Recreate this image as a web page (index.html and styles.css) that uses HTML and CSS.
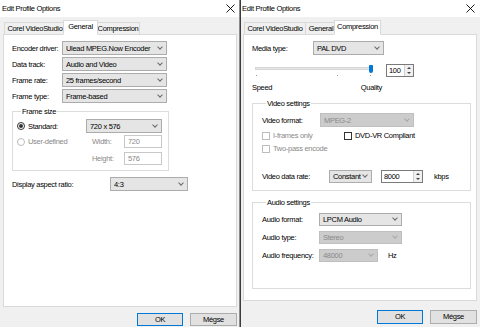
FILE: index.html
```html
<!DOCTYPE html>
<html lang="hu">
<head>
  <meta charset="UTF-8" />
  <title>Edit Profile Options</title>
  <link rel="stylesheet" href="styles.css">
</head>
<body>
  <div class="screen">

    <!-- General tab -->
    <div class="dialog dialog-left">
      <div class="titlebar">
        <span>Edit Profile Options</span>
        <svg class="close" width="9" height="9" viewBox="0 0 9 9"><path d="M0.5 0.5L8.5 8.5M8.5 0.5L0.5 8.5" stroke="#000" stroke-width="0.9"/></svg>
      </div>
      <div class="tabs">
        <div class="tab w-corel">Corel VideoStudio</div>
        <div class="tab active w-general">General</div>
        <div class="tab w-compr">Compression</div>
      </div>
      <div class="panel panel-general">
        <div class="row">
          <span class="lbl w50">Encoder driver:</span>
          <div class="combo w105"><span>Ulead MPEG.Now Encoder</span><i class="chev"></i></div>
        </div>
        <div class="row">
          <span class="lbl w50">Data track:</span>
          <div class="combo w105"><span>Audio and Video</span><i class="chev"></i></div>
        </div>
        <div class="row">
          <span class="lbl w50">Frame rate:</span>
          <div class="combo w105"><span>25 frames/second</span><i class="chev"></i></div>
        </div>
        <div class="row">
          <span class="lbl w50">Frame type:</span>
          <div class="combo w105"><span>Frame-based</span><i class="chev"></i></div>
        </div>

        <fieldset class="group group-frame">
          <legend>Frame size</legend>
          <div class="row row-std">
            <label class="opt w69"><span class="radio checked"></span>Standard:</label>
            <div class="combo w76"><span>720 x 576</span><i class="chev"></i></div>
          </div>
          <div class="row row-edit">
            <label class="opt w75 off"><span class="radio"></span>User-defined</label>
            <span class="lbl w32 off">Width:</span>
            <div class="edit off">720</div>
          </div>
          <div class="row row-edit">
            <span class="w75"></span>
            <span class="lbl w32 off">Height:</span>
            <div class="edit off">576</div>
          </div>
        </fieldset>

        <div class="row row-aspect">
          <span class="lbl w98">Display aspect ratio:</span>
          <div class="combo w78"><span>4:3</span><i class="chev"></i></div>
        </div>
      </div>
      <div class="footer">
        <div class="btn default">OK</div>
        <div class="btn">Mégse</div>
      </div>
    </div>

    <div class="divider"></div>

    <!-- Compression tab -->
    <div class="dialog dialog-right">
      <div class="titlebar">
        <span>Edit Profile Options</span>
        <svg class="close" width="9" height="9" viewBox="0 0 9 9"><path d="M0.5 0.5L8.5 8.5M8.5 0.5L0.5 8.5" stroke="#000" stroke-width="0.9"/></svg>
      </div>
      <div class="tabs">
        <div class="tab w-corel">Corel VideoStudio</div>
        <div class="tab w-general">General</div>
        <div class="tab active w-compr">Compression</div>
      </div>
      <div class="panel panel-compr">
        <div class="row">
          <span class="lbl w61">Media type:</span>
          <div class="combo w71"><span>PAL DVD</span><i class="chev"></i></div>
        </div>

        <div class="slider-row">
          <div class="slider">
            <div class="track"></div>
            <div class="thumb"></div>
            <span class="tick t1"></span>
            <span class="tick t2"></span>
            <span class="tick t3"></span>
          </div>
          <div class="spin w28"><span>100</span><span class="arrows"><i class="up"></i><i class="down"></i></span></div>
        </div>
        <div class="scale">
          <span>Speed</span>
          <span>Quality</span>
        </div>

        <fieldset class="group group-video">
          <legend>Video settings</legend>
          <div class="row">
            <span class="lbl w58">Video format:</span>
            <div class="combo w94 off"><span>MPEG-2</span><i class="chev"></i></div>
          </div>
          <div class="check-row">
            <label class="opt w82 off"><span class="check"></span>I-frames only</label>
            <label class="opt"><span class="check on"></span>DVD-VR Compliant</label>
          </div>
          <div class="check-row">
            <label class="opt off"><span class="check"></span>Two-pass encode</label>
          </div>
          <div class="row row-rate">
            <span class="lbl w67">Video data rate:</span>
            <div class="combo w43"><span>Constant</span><i class="chev"></i></div>
            <div class="spin w42 rate-spin"><span>8000</span><span class="arrows"><i class="up"></i><i class="down"></i></span></div>
            <span class="unit">kbps</span>
          </div>
        </fieldset>

        <fieldset class="group group-audio">
          <legend>Audio settings</legend>
          <div class="row">
            <span class="lbl w57">Audio format:</span>
            <div class="combo w83"><span>LPCM Audio</span><i class="chev"></i></div>
          </div>
          <div class="row">
            <span class="lbl w57">Audio type:</span>
            <div class="combo w83 off"><span>Stereo</span><i class="chev"></i></div>
          </div>
          <div class="row">
            <span class="lbl w57">Audio frequency:</span>
            <div class="combo w59 off"><span>48000</span><i class="chev"></i></div>
            <span class="unit hz">Hz</span>
          </div>
        </fieldset>
      </div>
      <div class="footer">
        <div class="btn default">OK</div>
        <div class="btn">Mégse</div>
      </div>
    </div>

  </div>
</body>
</html>
```

FILE: styles.css
```css
/* Windows 10 style dialog, scaled down */
:root {
  --face: #f0f0f0;
  --tab-border: #d9d9d9;
  --group-border: #dcdcdc;
  --combo-bg: #e5e5e5;
  --combo-border: #acacac;
  --combo-off-bg: #cccccc;
  --combo-off-border: #bfbfbf;
  --gray-text: #8a8a8a;
  --accent: #0078d7;
}

* {
  box-sizing: border-box;
}

body {
  margin: 0;
  background: var(--face);
  color: #000;
  font-family: "Liberation Sans", Arial, sans-serif;
  font-size: 7.5px;
  letter-spacing: -0.3px;
  line-height: 9px;
}

.screen {
  display: flex;
  width: 480px;
  height: 327px;
  overflow: hidden;
}

.dialog {
  display: flex;
  flex-direction: column;
  width: 239px;
  height: 327px;
  flex: none;
  background: var(--face);
}

.divider {
  width: 2px;
  flex: none;
  background: linear-gradient(to right, #8c8c8c 50%, #3c3c3c 50%);
}

/* Title bar */
.titlebar {
  height: 17px;
  background: #fff;
  display: flex;
  align-items: center;
  justify-content: space-between;
  padding: 0 2px 1px 2px;
}

.dialog-left .titlebar .close {
  margin-right: 2px;
}

.dialog-right .titlebar {
  padding-left: 1px;
}

.dialog-right .titlebar .close {
  margin-right: 3px;
}

/* Tabs */
.tabs {
  display: flex;
  align-items: flex-end;
  margin: 3px 0 -1px 4px;
  position: relative;
  z-index: 1;
}

.dialog-right .tabs {
  margin-left: 3px;
}

.tab {
  height: 13px;
  border: 1px solid var(--tab-border);
  margin-right: -1px;
  background: var(--face);
  text-align: center;
  line-height: 11px;
  white-space: nowrap;
}

.tab.active {
  height: 15px;
  background: #fff;
  border-bottom-color: #fff;
  margin: 0 -2px 0 -2px;
  padding: 0 2px;
  line-height: 11px;
  position: relative;
  z-index: 2;
}

.w-corel { width: 62px; }
.w-general { width: 32px; }
.w-general.active { width: 35px; }
.w-compr { width: 44px; }
.w-compr.active { width: 47px; }

/* Panel */
.panel {
  border: 1px solid var(--tab-border);
  background: #fff;
  margin: 0 2px 0 3px;
  padding: 6px 0 0 8px;
}

.panel-general {
  height: 273px;
}

.dialog-right .panel {
  margin: 0 3px 0 2px;
  height: 267px;
}

/* Form rows */
.row {
  display: flex;
  align-items: center;
  height: 14px;
  margin-bottom: 2px;
  white-space: nowrap;
}

.lbl {
  flex: none;
}

.off {
  color: var(--gray-text);
}

.w28 { width: 28px; }
.w32 { width: 32px; }
.w42 { width: 42px; }
.w43 { width: 43px; }
.w50 { width: 50px; }
.w57 { width: 57px; }
.w58 { width: 58px; }
.w59 { width: 59px; }
.w61 { width: 61px; }
.w67 { width: 67px; }
.w69 { width: 69px; }
.w71 { width: 71px; }
.w75 { width: 75px; flex: none; }
.w76 { width: 76px; }
.w78 { width: 78px; }
.w82 { width: 82px; }
.w83 { width: 83px; }
.w94 { width: 94px; }
.w98 { width: 98px; }
.w105 { width: 105px; }

/* Combo box */
.combo {
  flex: none;
  height: 14px;
  border: 1px solid var(--combo-border);
  background: var(--combo-bg);
  display: flex;
  align-items: center;
  justify-content: space-between;
  padding: 0 3px 0 3px;
}

.combo.off {
  background: var(--combo-off-bg);
  border-color: var(--combo-off-border);
  color: var(--gray-text);
}

.chev {
  width: 4px;
  height: 4px;
  border-right: 1px solid #6a6a6a;
  border-bottom: 1px solid #6a6a6a;
  transform: rotate(45deg);
  margin: 0 1px 3px 0;
}

.combo.off .chev {
  border-color: #a8a8a8;
}

/* Edit boxes */
.edit {
  width: 38px;
  height: 13px;
  border: 1px solid #c8c8c8;
  background: #fff;
  padding-left: 3px;
  line-height: 11px;
}

.edit.off {
  color: var(--gray-text);
}

/* Radio and check boxes */
.opt {
  display: flex;
  align-items: center;
  flex: none;
}

.radio {
  width: 8px;
  height: 8px;
  border: 1px solid #333;
  border-radius: 50%;
  margin-right: 3px;
  display: flex;
  align-items: center;
  justify-content: center;
}

.radio.checked::after {
  content: "";
  width: 4px;
  height: 4px;
  border-radius: 50%;
  background: #333;
}

.opt.off .radio {
  border-color: #bcbcbc;
}

.check {
  width: 8px;
  height: 8px;
  border: 1px solid #bcbcbc;
  background: #fff;
  margin-right: 3px;
}

.check.on {
  border-color: #333;
}

/* Group boxes */
.group {
  margin: 0;
  padding: 0;
  border: 1px solid var(--group-border);
  border-radius: 0;
}

.group legend {
  margin-left: 4px;
  padding: 0 1px;
  line-height: 9px;
}

.group-frame {
  width: 157px;
  margin-top: 4px;
  padding: 3px 0 5px 4px;
}

.row-std {
  margin-bottom: 2px;
}

.row-edit {
  height: 13px;
  margin-bottom: 4px;
}

.row-edit:last-child {
  margin-bottom: 0;
}

.row-aspect {
  margin-top: 6px;
}

/* Slider */
.slider-row {
  display: flex;
  align-items: center;
  height: 13px;
  margin-top: 9px;
}

.slider {
  position: relative;
  width: 134px;
  height: 13px;
  flex: none;
}

.track {
  position: absolute;
  left: 3px;
  top: 3px;
  width: 118px;
  height: 3px;
  background: #e7e7e7;
  border: 1px solid #d6d6d6;
}

.thumb {
  position: absolute;
  left: 117px;
  top: 1px;
  width: 4px;
  height: 8px;
  background: var(--accent);
  border-radius: 1px 1px 2px 2px;
}

.tick {
  position: absolute;
  top: 11px;
  width: 1px;
  height: 1px;
  background: #9a9a9a;
}

.t1 { left: 4px; }
.t2 { left: 85px; }
.t3 { left: 118px; }

.spin {
  height: 13px;
  border: 1px solid #7a7a7a;
  background: #fff;
  display: flex;
  justify-content: space-between;
  padding-left: 2px;
  line-height: 11px;
  flex: none;
}

.arrows {
  width: 9px;
  display: flex;
  flex-direction: column;
  justify-content: space-evenly;
  align-items: center;
  background: #f0f0f0;
  border-left: 1px solid #d0d0d0;
}

.arrows i {
  width: 0;
  height: 0;
  border-left: 2px solid transparent;
  border-right: 2px solid transparent;
}

.arrows .up {
  border-bottom: 2px solid #444;
}

.arrows .down {
  border-top: 2px solid #444;
}

.scale {
  display: flex;
  justify-content: space-between;
  width: 130px;
  margin-top: 6px;
}

/* Video settings */
.group-video {
  width: 219px;
  margin-top: 7px;
  padding: 5px 0 7px 9px;
}

.check-row {
  display: flex;
  align-items: center;
  height: 9px;
  margin-top: 4px;
}

.group-video > .row {
  margin-bottom: 0;
}

.row-rate {
  height: 13px;
  margin-top: 17px;
}

.row-rate .combo {
  height: 13px;
}

.rate-spin {
  margin-left: 9px;
}

.unit {
  margin-left: 11px;
}

/* Audio settings */
.group-audio {
  width: 219px;
  margin-top: 7px;
  padding: 6px 0 26px 9px;
}

.group-audio .row {
  height: 13px;
  margin-bottom: 5px;
}

.group-audio .row:last-child {
  margin-bottom: 0;
}

.group-audio .combo {
  height: 13px;
}

.unit.hz {
  margin-left: 10px;
}

/* Buttons */
.footer {
  display: flex;
  justify-content: flex-end;
  gap: 7px;
  padding: 6px 2px 0 0;
}

.dialog-right .footer {
  padding: 9px 3px 0 0;
}

.btn {
  width: 46px;
  height: 13px;
  border: 1px solid #adadad;
  background: #e1e1e1;
  text-align: center;
  line-height: 11px;
}

.dialog-right .btn {
  height: 14px;
  line-height: 12px;
}

.btn + .btn {
  width: 47px;
}

.btn.default {
  border: 1px solid var(--accent);
  box-shadow: inset 0 0 0 1px #e1e1e1;
}
```
